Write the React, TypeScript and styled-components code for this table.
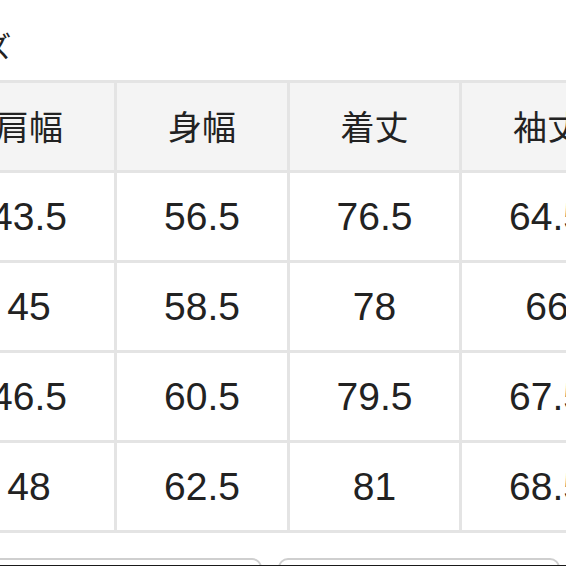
import React from "react";
import styled, { createGlobalStyle } from "styled-components";

const headers = ["肩幅", "身幅", "着丈", "袖丈"];

const rows = [
  ["43.5", "56.5", "76.5", "64.5"],
  ["45", "58.5", "78", "66"],
  ["46.5", "60.5", "79.5", "67.5"],
  ["48", "62.5", "81", "68.5"],
];

const App = () => {
  return (
    <Frame>
      <GlobalStyle />
      <Title>サイズ</Title>
      <Table>
        {headers.map((h) => (
          <HeadCell key={h}>{h}</HeadCell>
        ))}
        {rows.map((row, i) =>
          row.map((v, j) => <Cell key={`${i}-${j}`}>{v}</Cell>)
        )}
      </Table>
      <Footer>
        <Card />
        <Card />
      </Footer>
    </Frame>
  );
};

const GlobalStyle = createGlobalStyle`
  html, body {
    margin: 0;
    padding: 0;
    background: #fff;
  }
`;

const Frame = styled.div`
  width: 566px;
  height: 566px;
  overflow: hidden;
  box-sizing: border-box;
  border-bottom: 1px solid #1a1a1a;
  display: flex;
  flex-direction: column;
  background: #fff;
`;

const Title = styled.div`
  font-family: "Noto Sans CJK JP", sans-serif;
  font-size: 29px;
  line-height: 32px;
  color: #222;
  margin: 29px 0 0 -75px;
  white-space: nowrap;
`;

const Table = styled.div`
  display: grid;
  grid-template-columns: 170px 170px 169px 170px;
  grid-auto-rows: 87px;
  gap: 3px;
  padding: 3px;
  background: #e4e4e4;
  margin: 19px 0 0 -59px;
  width: max-content;
`;

const BaseCell = styled.div`
  display: flex;
  align-items: center;
  justify-content: center;
  color: #222;
`;

const HeadCell = styled(BaseCell)`
  background: #f4f4f4;
  font-family: "Noto Sans CJK JP", sans-serif;
  font-size: 34px;
  padding-bottom: 2px;
`;

const Cell = styled(BaseCell)`
  background: #fff;
  font-family: "Liberation Sans", Arial, sans-serif;
  font-size: 39px;
`;

const Footer = styled.div`
  display: flex;
  gap: 16px;
  margin: 25px 0 0 -20px;
`;

const Card = styled.div`
  box-sizing: border-box;
  flex: 0 0 282px;
  height: 40px;
  border: 2px solid #cfcfcf;
  border-radius: 10px;
  background: #fff;
`;

export default App;
